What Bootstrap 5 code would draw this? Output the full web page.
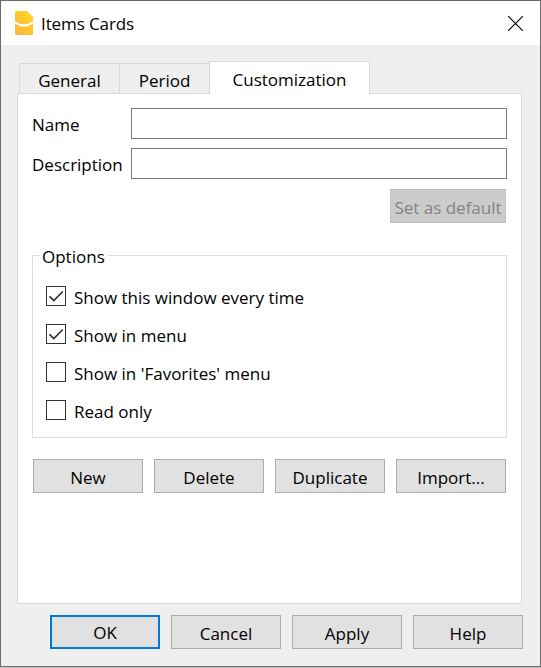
<!DOCTYPE html>
<html lang="en">
<head>
<meta charset="utf-8">
<meta name="viewport" content="width=device-width, initial-scale=1">
<title>Items Cards</title>
<link href="https://cdn.jsdelivr.net/npm/bootstrap@5.3.0/dist/css/bootstrap.min.css" rel="stylesheet">
<style>
body{margin:0;background:#c4c4c0;font-family:"Open Sans","Noto Sans",sans-serif;font-size:17px;line-height:24px;color:#000;white-space:nowrap;overflow:hidden}
.window{width:541px;height:667px;border:1px solid #6b6b6b;background:#efefef}
.titlebar{height:44px;padding:0 17px 0 14px}
.titlebar h1{font-size:17px;line-height:24px;margin:1px 0 0 8px;font-weight:400;letter-spacing:-.1px}
.close-x{border:0;background:none;padding:0;line-height:0}
.content-area{padding:16px 18px 0 16px}
.nav-tabs{border:0;height:33px;padding-left:2px;position:relative;z-index:1}
.nav-tabs .nav-link{border:1px solid #d9d9d9;border-radius:0;margin:0;background:#efefef;color:#000;padding:4px 0 0;height:31px;text-align:center}
.nav-tabs .nav-link.active{background:#fff;border-color:#d9d9d9;border-bottom:0;height:33px;padding-top:3px;color:#000}
.t1{width:101px}.t2{width:89px}.nav-tabs .t2{border-left:0;border-right:0}.t3{width:161px}
.pane{height:511px;margin-top:-1px;border:1px solid #d9d9d9;background:#fff;padding:14px 14px 0}
.field{height:31px;margin-bottom:9px}
.field label{width:99px;padding-top:2px}
.field .form-control{height:31px;width:376px;border:1px solid #7a7a7a;border-radius:0;padding:2px 6px;font-size:17px}
.set-row{padding:1px 1px 0 0}
.btn{--bs-btn-font-size:17px;--bs-btn-line-height:24px;--bs-btn-border-radius:0;--bs-btn-padding-x:0;--bs-btn-padding-y:0;width:110px;height:34px;padding-top:3px;background:#e1e1e1;border:1px solid #adadad;color:#000}
.btn.primary-action{border:2px solid #0078d7;padding-top:2px}
.btn:disabled{width:116px;background:#ccc;border-color:#bfbfbf;color:#838383;opacity:1}
.group{height:183px;margin-top:32px;border:1px solid #dcdcdc;padding:30px 13px 0}
.group legend{float:none;width:fit-content;font-size:17px;line-height:24px;margin:-41px 0 17px -6px;padding:0 3px 0 2px;background:#fff}
.form-check{height:20px;min-height:0;margin:0 0 18px;padding:0}
.form-check-input{width:20px;height:20px;border:1px solid #333;border-radius:0!important;margin:0!important;float:none!important}
.form-check-input:checked{background-color:#fff;border-color:#333;background-size:18px 18px;background-image:url("data:image/svg+xml,%3Csvg xmlns='http://www.w3.org/2000/svg' viewBox='0 0 18 18'%3E%3Cpath d='M2.500 9.300l4.300 4.200 9-9' fill='none' stroke='%23333' stroke-width='1.700'/%3E%3C/svg%3E")}
.form-check label{margin:3px 0 0 8px}
.actions{margin-top:21px;padding-left:1px}
.gap-b{gap:11px}
.dialog-buttons{padding:11px 17px 0 0}
</style>
<script src="https://cdn.jsdelivr.net/npm/bootstrap@5.3.0/dist/js/bootstrap.bundle.min.js"></script>
</head>
<body>
<div class="window">
<header class="titlebar d-flex align-items-center bg-white">
<svg width="18" height="24" viewBox="0 0 18 24"><defs><linearGradient id="g" x1="1" y1="0" x2="0" y2="1"><stop stop-color="#ffdb22"/><stop offset="1" stop-color="#fbb23e"/></linearGradient></defs><path d="M2 0H12L18 6V24H2Q0 24 0 22V2Q0 0 2 0Z" fill="url(#g)"/><path d="M0 10.500Q9 16 18 10.500V12.500Q9 19 0 12.500Z" fill="#fff"/></svg>
<h1>Items Cards</h1>
<button class="close-x ms-auto" aria-label="Close"><svg width="15" height="15" viewBox="0 0 15 15"><path d="M0 0L15 15M15 0L0 15" stroke="#000" stroke-width="1.1"/></svg></button>
</header>
<main class="content-area">
<div class="nav nav-tabs align-items-end flex-nowrap" role="tablist">
<button class="nav-link t1">General</button><button class="nav-link t2">Period</button><button class="nav-link active t3">Customization</button>
</div>
<section class="pane">
<div class="field d-flex align-items-center"><label for="n">Name</label><input id="n" class="form-control"></div>
<div class="field d-flex align-items-center"><label for="d">Description</label><input id="d" class="form-control"></div>
<div class="d-flex justify-content-end set-row"><button class="btn" disabled>Set as default</button></div>
<div class="group" role="group">
<legend>Options</legend>
<div class="form-check d-flex align-items-center"><input class="form-check-input" type="checkbox" id="a" checked><label for="a">Show this window every time</label></div>
<div class="form-check d-flex align-items-center"><input class="form-check-input" type="checkbox" id="b" checked><label for="b">Show in menu</label></div>
<div class="form-check d-flex align-items-center"><input class="form-check-input" type="checkbox" id="c"><label for="c">Show in 'Favorites' menu</label></div>
<div class="form-check d-flex align-items-center"><input class="form-check-input" type="checkbox" id="e"><label for="e">Read only</label></div>
</div>
<div class="actions d-flex gap-b"><button class="btn">New</button><button class="btn">Delete</button><button class="btn">Duplicate</button><button class="btn">Import...</button></div>
</section>
</main>
<footer class="dialog-buttons d-flex gap-b justify-content-end"><button class="btn primary-action">OK</button><button class="btn">Cancel</button><button class="btn">Apply</button><button class="btn">Help</button></footer>
</div>
</body>
</html>
